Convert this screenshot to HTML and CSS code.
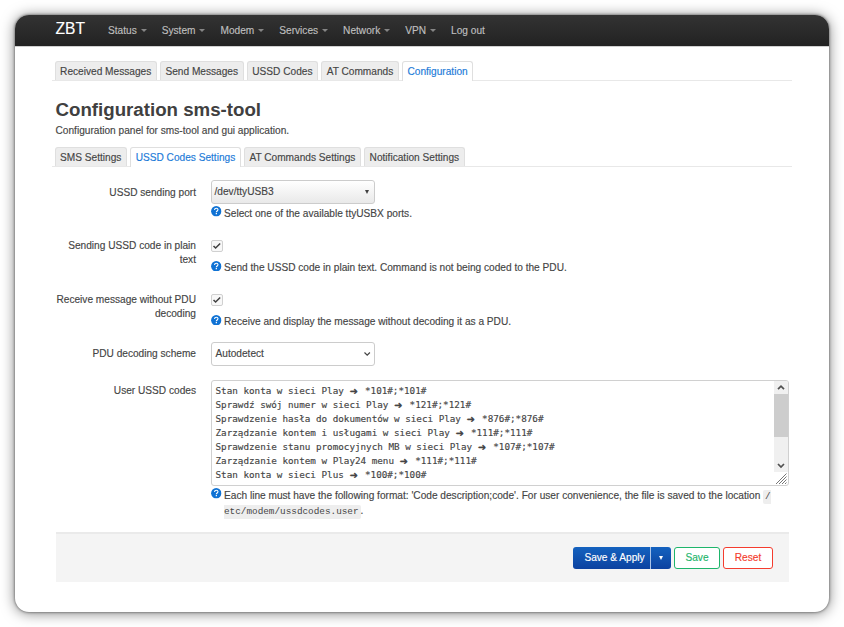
FILE: index.html
```html
<!DOCTYPE html>
<html lang="en">
<head>
<meta charset="utf-8">
<title>Configuration sms-tool</title>
<link rel="stylesheet" href="styles.css">
</head>
<body>
<svg class="defs" width="0" height="0" aria-hidden="true">
  <symbol id="help" viewBox="0 0 22 22"><circle cx="11" cy="11" r="10.8" fill="#0f72d4"/><path d="M7.400 8.400c.2-4.800 7.400-4.600 7.200-.4-.1 2.400-3.300 2.500-3.500 5" fill="none" stroke="#fff" stroke-width="2.300"/><rect x="9.900" y="14.700" width="2.600" height="2.600" fill="#fff"/></symbol>
</svg>
<div class="window">
  <header class="topbar">
    <a class="brand">ZBT</a>
    <nav class="menu">
      <a class="drop">Status</a><a class="drop">System</a><a class="drop">Modem</a><a class="drop">Services</a><a class="drop">Network</a><a class="drop">VPN</a><a>Log out</a>
    </nav>
  </header>
  <main>
    <ul class="tabs">
      <li>Received Messages</li><li>Send Messages</li><li>USSD Codes</li><li>AT Commands</li><li class="active">Configuration</li>
    </ul>
    <h2>Configuration sms-tool</h2>
    <p class="descr">Configuration panel for sms-tool and gui application.</p>
    <ul class="tabs">
      <li>SMS Settings</li><li class="active">USSD Codes Settings</li><li>AT Commands Settings</li><li>Notification Settings</li>
    </ul>
    <section class="form">
      <div class="row">
        <label>USSD sending port</label>
        <div class="field">
          <div class="select combo"><span>/dev/ttyUSB3</span><i class="tri"></i></div>
          <div class="help"><svg><use href="#help"/></svg><span>Select one of the available ttyUSBX ports.</span></div>
        </div>
      </div>
      <div class="row">
        <label>Sending USSD code in plain text</label>
        <div class="field">
          <div class="check"><svg viewBox="0 0 10 10"><path d="M1.600 5.200l2.200 2.200L8.600 2.600"/></svg></div>
          <div class="help"><svg><use href="#help"/></svg><span>Send the USSD code in plain text. Command is not being coded to the PDU.</span></div>
        </div>
      </div>
      <div class="row">
        <label>Receive message without PDU decoding</label>
        <div class="field">
          <div class="check"><svg viewBox="0 0 10 10"><path d="M1.600 5.200l2.200 2.200L8.600 2.600"/></svg></div>
          <div class="help"><svg><use href="#help"/></svg><span>Receive and display the message without decoding it as a PDU.</span></div>
        </div>
      </div>
      <div class="row short">
        <label>PDU decoding scheme</label>
        <div class="field">
          <div class="select"><span>Autodetect</span><svg class="chev" viewBox="0 0 8 6"><path d="M1.500 1.500L4.200 4.200l2.700-2.700"/></svg></div>
        </div>
      </div>
      <div class="row last">
        <label>User USSD codes</label>
        <div class="field">
          <div class="area">
            <div class="lines">
              <div>Stan konta w sieci Play <b>➜</b> *101#;*101#</div>
              <div>Sprawdź swój numer w sieci Play <b>➜</b> *121#;*121#</div>
              <div>Sprawdzenie hasła do dokumentów w sieci Play <b>➜</b> *876#;*876#</div>
              <div>Zarządzanie kontem i usługami w sieci Play <b>➜</b> *111#;*111#</div>
              <div>Sprawdzenie stanu promocyjnych MB w sieci Play <b>➜</b> *107#;*107#</div>
              <div>Zarządzanie kontem w Play24 menu <b>➜</b> *111#;*111#</div>
              <div>Stan konta w sieci Plus <b>➜</b> *100#;*100#</div>
            </div>
            <div class="side">
              <div class="scroll">
                <svg viewBox="0 0 14 13"><path d="M4 8.200l3-3 3 3"/></svg>
                <div class="thumb"></div>
                <svg viewBox="0 0 14 13"><path d="M4 5l3 3 3-3"/></svg>
              </div>
              <svg class="grip" viewBox="0 0 14 13"><path d="M2 12L12.500 1.500M5 12l7.500-7.500M8 12l4.500-4.500M11 12l1.500-1.500"/></svg>
            </div>
          </div>
          <div class="help"><svg><use href="#help"/></svg><span>Each line must have the following format: 'Code description;code'. For user convenience, the file is saved to the location <code>/<br>etc/modem/ussdcodes.user</code>.</span></div>
        </div>
      </div>
    </section>
    <footer class="actions">
      <div class="split"><a class="apply">Save &amp; Apply</a><a class="more"><i class="tri"></i></a></div>
      <a class="btn save">Save</a>
      <a class="btn reset">Reset</a>
    </footer>
  </main>
</div>
</body>
</html>
```
FILE: styles.css
```css
* { box-sizing: border-box; }
body {
  margin: 0;
  height: 627px;
  padding: 15px;
  overflow: hidden;
  background: #fff;
  color: #454545;
  font: 10.14px/14px "Liberation Sans", Arial, sans-serif;
  -webkit-text-stroke: .15px;
}
.defs { position: absolute; }
.window {
  width: 814px;
  height: 597px;
  border-radius: 14px;
  overflow: hidden;
  background: #fff;
  box-shadow: 0 0 3px rgba(0,0,0,.6), 0 1px 14px rgba(0,0,0,.5);
}
.topbar {
  display: flex;
  align-items: center;
  height: 32px;
  padding-left: 40.5px;
  background: linear-gradient(#333, #222) padding-box;
  border-bottom: 1px solid #d0d0d0;
}
.brand { width: 52.5px; color: #fff; font-size: 15.6px; line-height: 28px; padding-bottom: 3px; }
.menu { display: flex; gap: 15px; color: #bfbfbf; }
.drop::after {
  content: "";
  display: inline-block;
  margin: 0 0 2px 4px;
  border: 3px solid transparent;
  border-top-color: #858585;
  border-bottom: 0;
}
main { padding: 14px 37px 0; }
.tabs {
  display: flex;
  gap: 3px;
  height: 20px;
  width: 740px;
  margin: 0;
  padding: 0 2.5px;
  list-style: none;
  border-bottom: 1px solid #e8e8e8;
}
.tabs li {
  height: 19px;
  padding: 2.5px 4.6px 0;
  border: 1px solid #dfdfdf;
  border-bottom: 0;
  border-radius: 3px 3px 0 0;
  background: #ededed;
  white-space: nowrap;
}
.tabs li.active { height: 20px; background: #fff; color: #1b7ad8; }
h2 { margin: 16px 0 0 3.5px; font-size: 18.7px; line-height: 25px; color: #404040; -webkit-text-stroke: 0; }
.descr { margin: 2px 0 9px 3.5px; height: 14px; }
.form { margin: 13px 0 0 3px; width: 734px; }
.row { display: flex; height: 54px; }
.row.short { height: 37.5px; }
.row.last { height: 152.5px; }
label { width: 141px; margin-right: 15px; padding-top: 5px; text-align: right; }
.row:first-child label { padding-top: 5.5px; }
.row.last label { padding-top: 4.5px; }
.field { width: 578px; }
.select {
  display: flex;
  align-items: center;
  justify-content: space-between;
  width: 164px;
  height: 24px;
  padding: 0 3px 0 3.5px;
  border: 1px solid #ccc;
  border-radius: 3px;
}
.combo { padding: 0 5px 0 2.5px; background: linear-gradient(#fff, #e9e9e9); }
.tri { border: 2px solid transparent; border-top: 4px solid #404040; border-bottom: 0; }
.chev { width: 8px; height: 6px; fill: none; stroke: #444; stroke-width: 1.2; }
.check { width: 11.5px; height: 11.5px; margin: 6px 0 8px; border: 1px solid #d0d0d0; border-radius: 2px; background: #f8f8f8; }
.check svg { display: block; width: 9.5px; height: 9.5px; fill: none; stroke: #404040; stroke-width: 1.6; }
.help { display: flex; gap: 2.5px; padding-top: 2px; }
.help svg { flex: none; width: 10.5px; height: 10.5px; }
.help > span { padding-top: .5px; white-space: nowrap; }
.check + .help { padding-top: 1px; }
code {
  padding: 1px 2px 2px;
  border-radius: 2px;
  background: #eee;
  font: 9.35px/15px "Liberation Mono", monospace;
  -webkit-text-stroke: 0;
}
.area {
  display: flex;
  justify-content: space-between;
  height: 106.5px;
  border: 1px solid #d0d0d0;
  border-radius: 3px;
  overflow: hidden;
}
.lines { padding: 3px 0 0 3.5px; font: 9.28px/14px "DejaVu Sans Mono", monospace; }
.lines div { height: 14px; white-space: pre; }
.lines b { display: inline-block; width: 10px; font-size: 13.5px; line-height: 10px; vertical-align: -2px; }
.side { width: 14px; }
.scroll { height: 91px; background: #f0f0f0; }
.scroll svg { display: block; width: 14px; height: 13px; fill: none; stroke: #505050; stroke-width: 1.7; }
.thumb { height: 43px; margin-bottom: 22px; background: #cdcdcd; }
.grip { display: block; width: 14px; height: 13px; fill: none; stroke: #777; stroke-width: 1; }
.actions {
  display: flex;
  justify-content: flex-end;
  gap: 3px;
  width: 733px;
  height: 50px;
  margin-left: 3.5px;
  padding: 12.5px 15.5px 0 0;
  border-top: 2px solid #eaeaea;
  background: #f4f4f4;
}
.split { display: flex; width: 98px; height: 22.5px; border-radius: 3px; overflow: hidden; background: linear-gradient(#1462bf, #0c42a0); color: #fff; line-height: 22px; }
.apply { width: 78px; padding-left: 6px; text-align: center; border-right: 1px solid #a9c3e8; }
.more { display: flex; flex: 1; align-items: center; justify-content: center; }
.more .tri { border-top-color: #fff; }
.btn { height: 22.5px; border: 1px solid; border-radius: 3px; background: #fff; text-align: center; line-height: 20px; }
.save { width: 46px; color: #1eb56b; }
.reset { width: 50px; color: #f43c2e; }
```
